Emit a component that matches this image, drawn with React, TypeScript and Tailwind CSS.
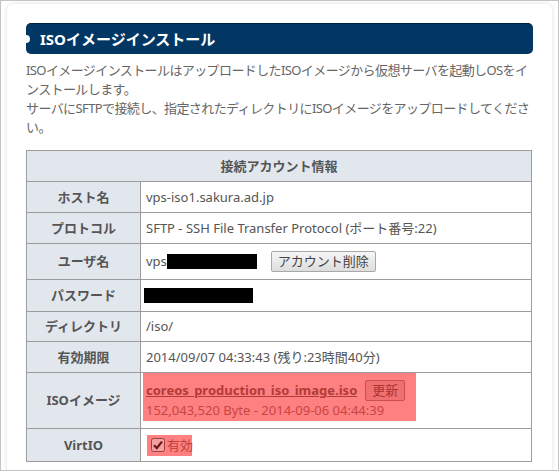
import React from "react";

const font = { fontFamily: '"Noto Sans", "Noto Sans CJK JP", sans-serif' };

function Row({ label, h, children }: { label: string; h: number; children: React.ReactNode }) {
  return (
    <tr style={{ height: h }}>
      <th className="border border-[#9c9c9c] bg-[#e2e7ee] text-center align-middle text-[13px] leading-[19px] font-bold text-[#555] p-0">
        {label}
      </th>
      <td className="border border-[#9c9c9c] bg-white align-middle text-[13px] leading-[19px] text-[#555] pl-[5px] p-0 whitespace-nowrap">
        {children}
      </td>
    </tr>
  );
}

export default function App() {
  return (
    <div style={font} className="w-[559px] h-[471px] overflow-hidden border border-[#c4c4c4] bg-white">
      <div className="mx-[6px] mt-[3px] h-[480px] rounded-t-[6px] bg-white shadow-[0_0_4px_rgba(0,0,0,0.14)] px-[19px] pt-[19px]">
        <div className="relative h-[31px] rounded-[5px] bg-[#023764] border-t border-[#00213f] flex items-center pl-[14px]">
          <span className="absolute left-[-4px] top-[11px] w-[8px] h-[8px] rounded-full bg-white" />
          <span className="text-white text-[15px] font-bold leading-none">ISOイメージインストール</span>
        </div>
        <p className="mt-[7px] text-[13px] leading-[19px] tracking-[-0.6px] text-[#666]">
          ISOイメージインストールはアップロードしたISOイメージから仮想サーバを起動しOSをインストールします。
          <br />
          サーバにSFTPで接続し、指定されたディレクトリにISOイメージをアップロードしてくださ
          <br />
          い。
        </p>
        <table className="mt-[13px] w-[505px] border-collapse table-fixed">
          <colgroup>
            <col style={{ width: 114 }} />
            <col style={{ width: 391 }} />
          </colgroup>
          <tbody>
            <tr style={{ height: 31 }}>
              <th colSpan={2} className="border border-[#9c9c9c] bg-[#e2e7ee] text-center text-[13px] leading-[19px] font-bold text-[#555] p-0">
                接続アカウント情報
              </th>
            </tr>
            <Row label="ホスト名" h={31}>vps-iso1.sakura.ad.jp</Row>
            <Row label="プロトコル" h={31}>SFTP - SSH File Transfer Protocol (ポート番号:22)</Row>
            <Row label="ユーザ名" h={36}>
              <div className="flex items-center">
                <span>vps</span>
                <span className="inline-block w-[90px] h-[15px] bg-black" />
                <button className="ml-[14px] h-[21px] px-[6px] rounded-[2px] border border-[#a8a8a8] bg-gradient-to-b from-[#f6f6f6] to-[#dddddd] text-[13px] text-[#444] leading-none">
                  アカウント削除
                </button>
              </div>
            </Row>
            <Row label="パスワード" h={32}>
              <span className="block w-[109px] h-[15px] bg-black -ml-[2px]" />
            </Row>
            <Row label="ディレクトリ" h={30}>/iso/</Row>
            <Row label="有効期限" h={31}>2014/09/07 04:33:43 (残り:23時間40分)</Row>
            <tr style={{ height: 55 }}>
              <th className="border border-[#9c9c9c] bg-[#e2e7ee] text-center align-middle text-[13px] leading-[19px] font-bold text-[#555] p-0">
                ISOイメージ
              </th>
              <td className="border border-[#9c9c9c] bg-white align-top pl-[2px] pt-0 pb-[7px] p-0">
                <div className="w-[273px] bg-[#ff8080] pl-[3px] pt-[7px] pb-[1px] whitespace-nowrap">
                  <div className="flex items-center h-[21px]">
                    <a className="text-[13px] font-bold text-[#b33a3a] underline">coreos_production_iso_image.iso</a>
                    <button className="ml-[8px] h-[21px] px-[6px] rounded-[2px] border border-[#c85050] bg-[#f07070] text-[13px] text-[#a83434] leading-none">
                      更新
                    </button>
                  </div>
                  <div className="text-[13px] leading-[19px] text-[#c94545]">152,043,520 Byte - 2014-09-06 04:44:39</div>
                </div>
              </td>
            </tr>
            <tr style={{ height: 33 }}>
              <th className="border border-[#9c9c9c] bg-[#e2e7ee] text-center align-middle text-[13px] leading-[19px] font-bold text-[#555] p-0">
                VirtIO
              </th>
              <td className="border border-[#9c9c9c] bg-white align-middle pl-[6px] p-0">
                <div className="flex items-center h-[21px] w-[45px] bg-[#ff8080] pl-[4px] whitespace-nowrap">
                  <svg width="14" height="14" viewBox="0 0 14 14" className="shrink-0">
                    <rect x="0.5" y="0.5" width="13" height="13" rx="2" fill="#f4a0a0" stroke="#9a4040" />
                    <path d="M3 7.2 L5.8 10 L11 3.6" fill="none" stroke="#6a1818" strokeWidth="2.2" />
                  </svg>
                  <span className="ml-[2px] text-[13px] leading-none text-[#b84040]">有効</span>
                </div>
              </td>
            </tr>
          </tbody>
        </table>
      </div>
    </div>
  );
}
